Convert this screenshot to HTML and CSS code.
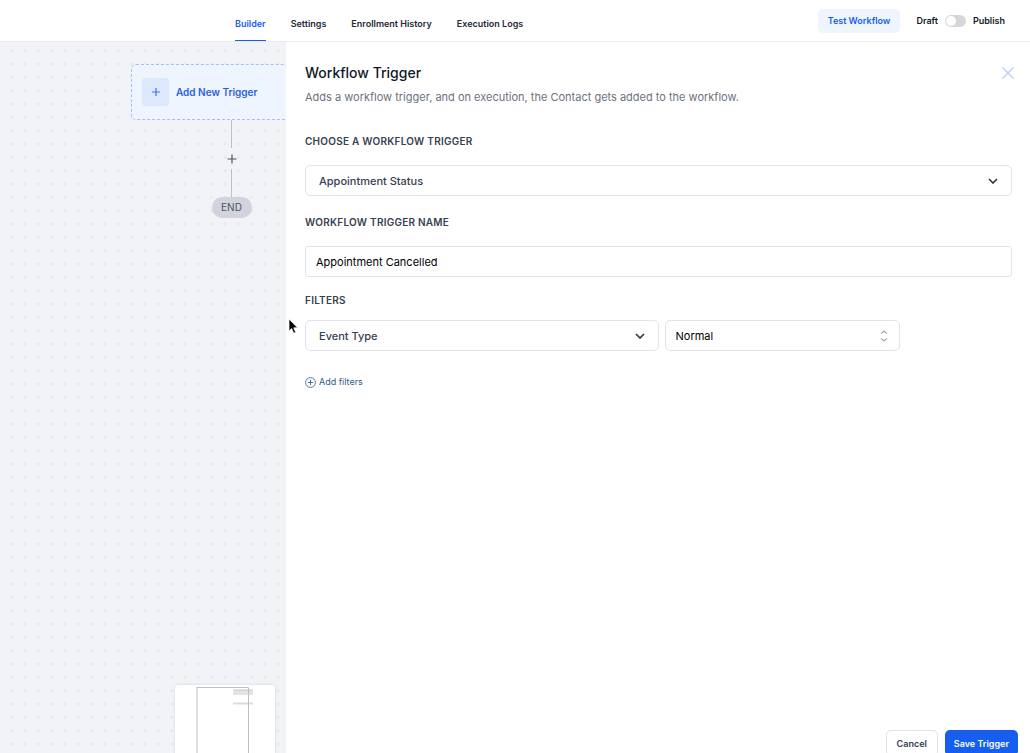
FILE: index.html
```html
<!DOCTYPE html>
<html lang="en">
<head>
  <meta charset="UTF-8" />
  <meta name="viewport" content="width=device-width, initial-scale=1.0"/>
  <title>Workflow Builder</title>
  <link rel="stylesheet" href="styles.css">
</head>
<body>
  <header class="topbar">
    <nav class="tabs">
      <a href="#builder" class="tab active">Builder</a>
      <a href="#settings" class="tab">Settings</a>
      <a href="#enrollment" class="tab">Enrollment History</a>
      <a href="#logs" class="tab">Execution Logs</a>
    </nav>
    <div class="topbar-actions">
      <button type="button" class="btn btn-test">Test Workflow</button>
      <label class="publish">
        <span>Draft</span>
        <input type="checkbox" class="switch" />
        <span>Publish</span>
      </label>
    </div>
  </header>

  <main class="workspace">
    <section class="canvas">
      <svg class="dots" aria-hidden="true">
        <defs>
          <pattern id="grid" width="20" height="20" patternUnits="userSpaceOnUse" patternTransform="translate(5 2) scale(0.66667)">
            <circle cx="10" cy="10" r="2" fill="#e4e6ea"/>
          </pattern>
        </defs>
        <rect width="100%" height="100%" fill="url(#grid)"/>
      </svg>

      <div class="flow">
        <button type="button" class="add-trigger">
          <span class="add-icon">
            <svg width="10" height="10" viewBox="0 0 10 10"><path d="M5 1v8M1 5h8" stroke="#4475e8" stroke-width="1.2"/></svg>
          </span>
          Add New Trigger
        </button>
        <span class="line"></span>
        <button type="button" class="add-step" aria-label="Add step">
          <svg width="10" height="10" viewBox="0 0 10 10"><path d="M5 .5v9M.5 5h9" stroke="#4b5563" stroke-width="1.2"/></svg>
        </button>
        <span class="line"></span>
        <span class="end">END</span>
      </div>

      <div class="minimap">
        <svg width="100" height="80" viewBox="0 0 100 80">
          <rect x="58" y="4" width="20" height="6" fill="#e4e4e4"/>
          <path d="M59 5.5h18" stroke="#d3d3d3"/>
          <path d="M58 18.500h20" stroke="#dcdcdc" stroke-width="2"/>
          <path d="M22 80V2.500" stroke="#d5d7dc" stroke-width="1.600"/>
          <path d="M21.500 2.500h52V80" fill="none" stroke="#b9bfcc"/>
        </svg>
      </div>
    </section>

    <form class="panel">
      <div class="panel-head">
        <div>
          <h1>Workflow Trigger</h1>
          <p>Adds a workflow trigger, and on execution, the Contact gets added to the workflow.</p>
        </div>
        <button type="button" class="close" aria-label="Close">
          <svg width="12" height="12" viewBox="0 0 12 12"><path d="M.8.8l10.400 10.400M11.200.8L.8 11.200" stroke="#b9cdf5" stroke-width="1.300" stroke-linecap="round"/></svg>
        </button>
      </div>

      <div class="field">
        <label for="trigger">Choose a workflow trigger</label>
        <div class="select">
          <select id="trigger"><option>Appointment Status</option></select>
          <svg width="10" height="6" viewBox="0 0 10 6"><path d="M1 1l4 4 4-4" fill="none" stroke="#253346" stroke-width="1.600"/></svg>
        </div>
      </div>

      <div class="field name">
        <label for="name">Workflow trigger name</label>
        <input type="text" id="name" value="Appointment Cancelled" />
      </div>

      <div class="field filters">
        <label for="filter">Filters</label>
        <div class="filter-row">
          <div class="select half">
            <select id="filter"><option>Event Type</option></select>
            <svg width="10" height="6" viewBox="0 0 10 6"><path d="M1 1l4 4 4-4" fill="none" stroke="#253346" stroke-width="1.600"/></svg>
          </div>
          <div class="select third">
            <select aria-label="Filter value"><option>Normal</option></select>
            <svg width="8" height="12" viewBox="0 0 8 12"><path d="M1 3.600L4 1l3 2.600M1 8.400L4 11l3-2.600" fill="none" stroke="#9ca3af" stroke-width="1.100"/></svg>
          </div>
        </div>
      </div>

      <button type="button" class="add-filters">
        <svg width="11" height="11" viewBox="0 0 11 11"><g fill="none" stroke="#41698c" stroke-width=".9"><circle cx="5.500" cy="5.500" r="4.900"/><path d="M5.500 2.800v5.400M2.800 5.500h5.400"/></g></svg>
        Add filters
      </button>

      <div class="panel-foot">
        <button type="button" class="btn btn-cancel">Cancel</button>
        <button type="submit" class="btn btn-save">Save Trigger</button>
      </div>
    </form>

    <svg class="pointer" width="11" height="17" viewBox="0 0 11 17" aria-hidden="true">
      <path d="M1 1v12l2.700-2.500 2 4.700 2-.9-2-4.500h3.800z" fill="#000" stroke="#fff" stroke-width=".7"/>
    </svg>
  </main>
</body>
</html>
```

FILE: styles.css
```css
* {
  box-sizing: border-box;
}

body {
  font-family: Inter, "Liberation Sans", sans-serif;
  margin: 0;
  height: 100vh;
  display: flex;
  flex-direction: column;
  overflow: hidden;
  background: #fff;
  color: #111827;
}

button,
input,
select {
  font-family: inherit;
  margin: 0;
}

button {
  border: none;
  background: none;
  padding: 0;
  cursor: pointer;
}

svg {
  display: block;
}

/* top bar */
.topbar {
  flex: none;
  height: 42px;
  display: flex;
  justify-content: space-between;
  border-bottom: 1px solid #ebecef;
  padding: 0 25px 0 235px;
}

.tabs {
  display: flex;
  gap: 25px;
}

.tab {
  font-size: 9px;
  font-weight: 600;
  line-height: 47px;
  height: 41px;
  color: #1f2937;
  text-decoration: none;
  white-space: nowrap;
}

.tab.active {
  color: #155eef;
  border-bottom: 1px solid #155eef;
}

.topbar-actions {
  display: flex;
  align-items: center;
  gap: 16px;
}

.btn {
  height: 26px;
  border-radius: 5px;
  padding: 0 9px;
  font-size: 9px;
  font-weight: 600;
}

.btn-test {
  height: 24px;
  padding: 0 10px;
  background: #eff5ff;
  color: #155eef;
}

.publish {
  display: flex;
  align-items: center;
  gap: 7px;
  font-size: 9px;
  font-weight: 600;
}

.switch {
  appearance: none;
  width: 21px;
  height: 12px;
  border-radius: 6px;
  background: #d5d6d8;
  display: flex;
  align-items: center;
  padding: 1px;
}

.switch::before {
  content: "";
  width: 10px;
  height: 10px;
  border-radius: 50%;
  background: #fff;
}

.switch:checked {
  background: #155eef;
  justify-content: flex-end;
}

/* canvas */
.workspace {
  flex: 1;
  min-height: 0;
  display: flex;
  position: relative;
}

.canvas {
  flex: none;
  width: 286px;
  position: relative;
  overflow: hidden;
  background: #f1f3f7;
}

.dots {
  width: 100%;
  height: 100%;
}

.flow {
  position: absolute;
  top: 22px;
  left: 131px;
  width: 201px;
  display: flex;
  flex-direction: column;
  align-items: center;
}

.add-trigger {
  width: 100%;
  height: 56px;
  display: flex;
  align-items: center;
  gap: 7px;
  padding: 0 10px;
  border: 1px dashed #a5c0f3;
  border-radius: 5px;
  background: #eef5fe;
  color: #2b5fe0;
  font-size: 10px;
  font-weight: 600;
}

.add-icon {
  width: 27px;
  height: 28px;
  border-radius: 4px;
  background: #dbe8fd;
  display: flex;
  align-items: center;
  justify-content: center;
}

.line {
  width: 1px;
  height: 28px;
  background: #bcc0c8;
}

.add-step {
  height: 21px;
  display: flex;
  align-items: center;
}

.end {
  width: 40px;
  border-radius: 10px;
  background: #d1d4dc;
  color: #4b5563;
  font-size: 10px;
  line-height: 21px;
  text-align: center;
}

.minimap {
  position: absolute;
  right: 11px;
  bottom: -12px;
  width: 100px;
  height: 80px;
  border-radius: 3px;
  background: #fff;
  box-shadow: 0 0 3px rgba(0, 0, 0, 0.14);
}

/* trigger panel */
.panel {
  flex: 1;
  min-width: 0;
  display: flex;
  flex-direction: column;
  padding: 21px 18px 0 19px;
}

.panel-head {
  display: flex;
  justify-content: space-between;
  align-items: flex-start;
  margin-bottom: 28px;
}

h1 {
  margin: 0;
  font-size: 14px;
  font-weight: 500;
  line-height: 20px;
}

.panel-head p {
  margin: 5px 0 0;
  font-size: 11px;
  line-height: 18px;
  color: #6b7280;
}

.close {
  padding: 4px 0;
  margin-right: -2px;
}

.field {
  margin-bottom: 19px;
}

.field label {
  display: block;
  font-size: 10px;
  font-weight: 600;
  line-height: 14px;
  margin-bottom: 17px;
  color: #374151;
  text-transform: uppercase;
  letter-spacing: 0.025em;
}

.field select,
.field input {
  display: block;
  width: 100%;
  height: 31px;
  border: 1px solid #e2e4e8;
  border-radius: 5px;
  background: #fff;
  font-size: 11px;
}

.field select {
  appearance: none;
  padding: 0 30px 0 13px;
  color: #374151;
  font-weight: 500;
}

.field input {
  padding: 0 10px;
  border-radius: 3px;
  color: #000;
}

.select {
  position: relative;
}

.select svg {
  position: absolute;
  right: 14px;
  top: 50%;
  transform: translateY(-50%);
  pointer-events: none;
}

.name {
  margin-bottom: 16px;
}

.filters label {
  margin-bottom: 13px;
}

.filter-row {
  display: flex;
  gap: 6px;
}

.half {
  flex: none;
  width: 50%;
}

.third {
  flex: none;
  width: calc(100% / 3);
}

.third select {
  padding-left: 10px;
  color: #000;
  font-weight: 400;
}

.third svg {
  right: 12px;
}

.add-filters {
  align-self: flex-start;
  display: flex;
  align-items: center;
  gap: 3px;
  margin-top: 5px;
  font-size: 9px;
  line-height: 14px;
  color: #2f5d85;
}

.panel-foot {
  display: flex;
  justify-content: flex-end;
  gap: 7px;
  margin: auto -6px -3px 0;
}

.btn-cancel {
  border: 1px solid #dfe1e6;
  padding: 0 10px;
  color: #374151;
}

.btn-save {
  background: #155eef;
  color: #fff;
}

.pointer {
  position: absolute;
  left: 288px;
  top: 276px;
}
```
